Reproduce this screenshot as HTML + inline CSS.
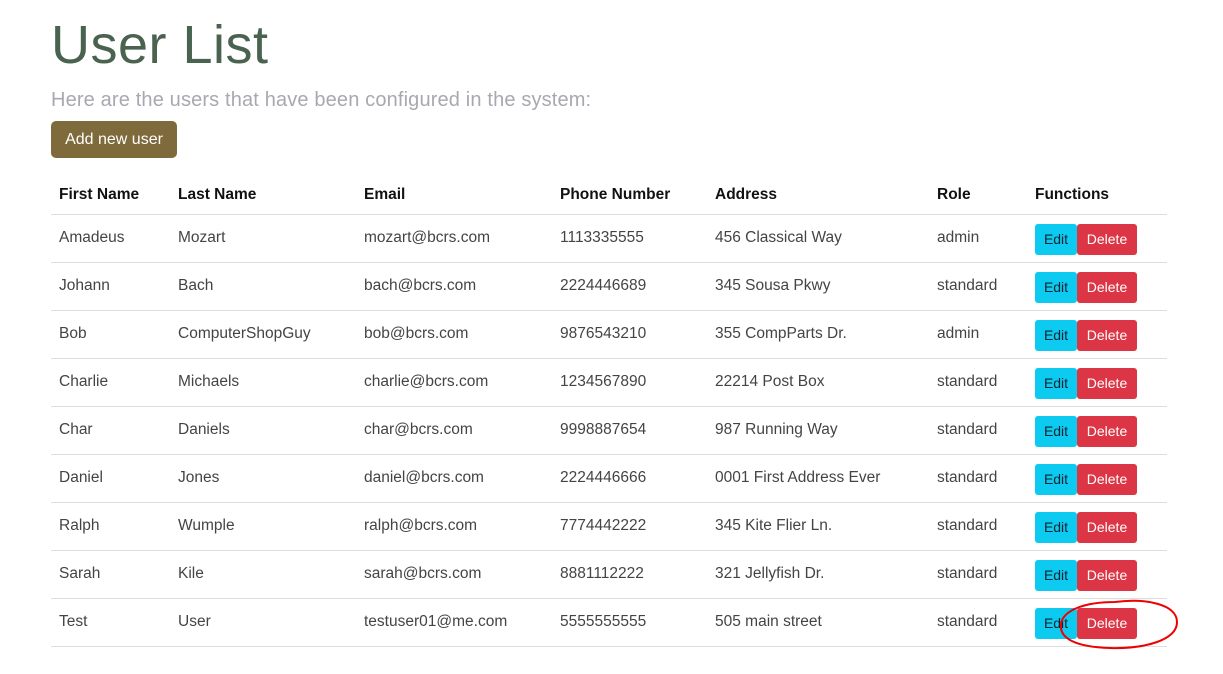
<!DOCTYPE html>
<html><head><style>
body{margin:0;background:#fff;font-family:"Liberation Sans",sans-serif;color:#222;}
h1{position:absolute;left:51px;top:14px;margin:0;font-weight:normal;font-size:54px;color:#4a6350;letter-spacing:0.5px;}
.sub{position:absolute;left:51px;top:89px;font-size:20px;letter-spacing:0.15px;color:#a8a8b0;}
.add{position:absolute;left:51px;top:121px;width:126px;height:37px;background:#7e6a3a;color:#fff;border-radius:5px;font-size:16px;line-height:37px;text-align:center;}
table{position:absolute;left:51px;top:174px;width:1116px;border-collapse:collapse;font-size:15.5px;}
th{text-align:left;font-weight:bold;height:38px;padding:2px 0 0 8px;border-bottom:1px solid #ddd;vertical-align:middle;color:#111;}
td{height:45px;padding:0 0 2px 8px;border-bottom:1px solid #ddd;color:#444;vertical-align:middle;}
td:last-child{padding:2px 0 0 8px;}
.e,.d{display:inline-block;height:31px;line-height:31px;font-size:14px;border-radius:3px;text-align:center;vertical-align:middle;}
.e{width:42px;background:#0dcaf0;color:#123;}
.d{width:60px;background:#dc3545;color:#fff;}
</style></head><body>
<h1>User List</h1>
<div class="sub">Here are the users that have been configured in the system:</div>
<div class="add">Add new user</div>
<table>
<tr><th style="width:111px">First Name</th><th style="width:178px">Last Name</th><th style="width:188px">Email</th><th style="width:147px">Phone Number</th><th style="width:214px">Address</th><th style="width:90px">Role</th><th>Functions</th></tr>
<tr><td>Amadeus</td><td>Mozart</td><td>mozart@bcrs.com</td><td>1113335555</td><td>456 Classical Way</td><td>admin</td><td><span class="e">Edit</span><span class="d">Delete</span></td></tr>
<tr><td>Johann</td><td>Bach</td><td>bach@bcrs.com</td><td>2224446689</td><td>345 Sousa Pkwy</td><td>standard</td><td><span class="e">Edit</span><span class="d">Delete</span></td></tr>
<tr><td>Bob</td><td>ComputerShopGuy</td><td>bob@bcrs.com</td><td>9876543210</td><td>355 CompParts Dr.</td><td>admin</td><td><span class="e">Edit</span><span class="d">Delete</span></td></tr>
<tr><td>Charlie</td><td>Michaels</td><td>charlie@bcrs.com</td><td>1234567890</td><td>22214 Post Box</td><td>standard</td><td><span class="e">Edit</span><span class="d">Delete</span></td></tr>
<tr><td>Char</td><td>Daniels</td><td>char@bcrs.com</td><td>9998887654</td><td>987 Running Way</td><td>standard</td><td><span class="e">Edit</span><span class="d">Delete</span></td></tr>
<tr><td>Daniel</td><td>Jones</td><td>daniel@bcrs.com</td><td>2224446666</td><td>0001 First Address Ever</td><td>standard</td><td><span class="e">Edit</span><span class="d">Delete</span></td></tr>
<tr><td>Ralph</td><td>Wumple</td><td>ralph@bcrs.com</td><td>7774442222</td><td>345 Kite Flier Ln.</td><td>standard</td><td><span class="e">Edit</span><span class="d">Delete</span></td></tr>
<tr><td>Sarah</td><td>Kile</td><td>sarah@bcrs.com</td><td>8881112222</td><td>321 Jellyfish Dr.</td><td>standard</td><td><span class="e">Edit</span><span class="d">Delete</span></td></tr>
<tr><td>Test</td><td>User</td><td>testuser01@me.com</td><td>5555555555</td><td>505 main street</td><td>standard</td><td><span class="e">Edit</span><span class="d">Delete</span></td></tr>
</table>
<svg style="position:absolute;left:1055px;top:596px" width="130" height="60"><path d="M60 6 C90 2 122 8 122 26 C122 44 90 53 55 52 C20 51 4 42 6 28 C8 14 30 6 60 6" fill="none" stroke="#e00" stroke-width="2"/></svg>
</body></html>
